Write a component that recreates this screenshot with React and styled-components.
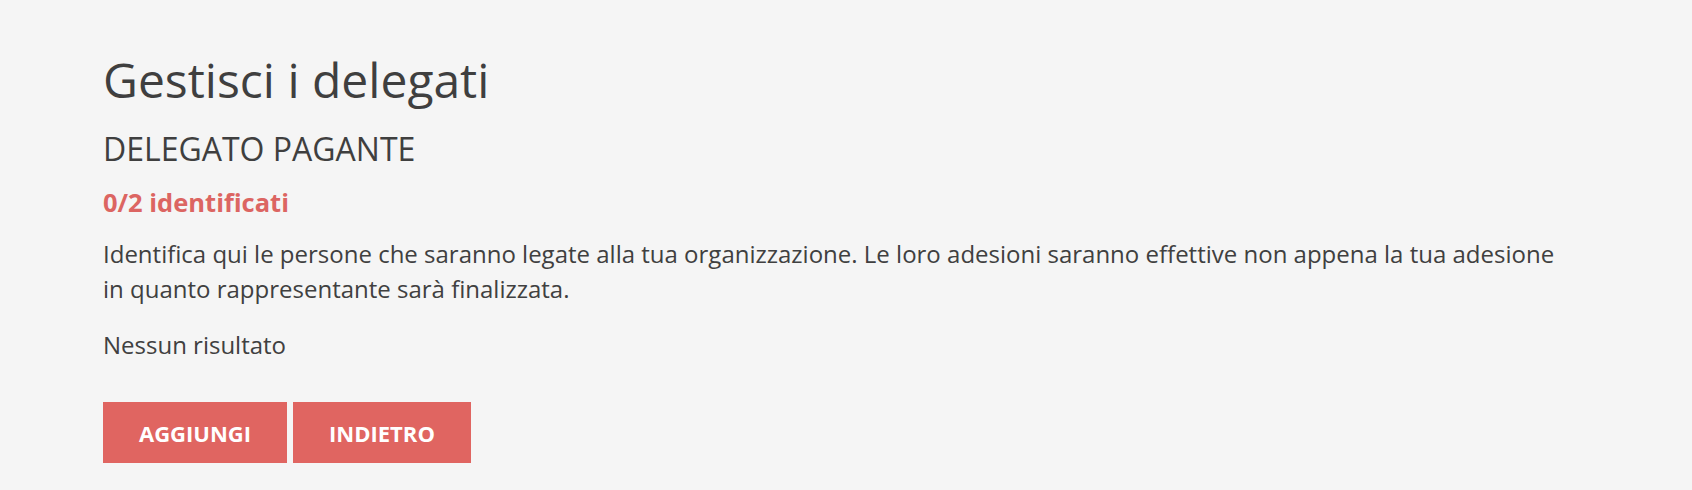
import React from "react";
import styled, { createGlobalStyle } from "styled-components";

const GlobalStyle = createGlobalStyle`
  html, body {
    margin: 0;
    padding: 0;
    background: #f5f5f5;
  }
  body {
    font-family: "Open Sans", "Noto Sans", sans-serif;
    color: #404040;
  }
`;

const Page = styled.main`
  box-sizing: border-box;
  min-height: 490px;
  padding: 46px 100px 26px 103px;
`;

const Title = styled.h1`
  margin: 0;
  font-size: 48px;
  font-weight: 400;
  line-height: 68px;
  color: #3f3f3f;
`;

const Subtitle = styled.h2`
  margin: 13px 0 0;
  font-size: 32px;
  font-weight: 400;
  line-height: 44px;
  color: #3f3f3f;
`;

const Counter = styled.p`
  margin: 15px 0 0;
  font-size: 25.5px;
  font-weight: 700;
  line-height: 32px;
  color: #dc6562;
`;

const Text = styled.p`
  margin: ${(p) => p.$top || 0}px 0 0;
  max-width: 1465px;
  font-size: 24px;
  line-height: 35px;
  color: #404040;
`;

const Actions = styled.div`
  display: flex;
  gap: 6px;
  margin-top: 40px;
`;

const Button = styled.button`
  height: 61px;
  padding: 0 36px;
  border: none;
  border-radius: 0;
  background: #e06561;
  color: #ffffff;
  font-family: "Open Sans", sans-serif;
  font-size: 22px;
  font-weight: 700;
  text-transform: uppercase;
  cursor: pointer;
`;

export default function App() {
  return (
    <>
      <GlobalStyle />
      <Page>
        <Title>Gestisci i delegati</Title>
        <Subtitle>DELEGATO PAGANTE</Subtitle>
        <Counter>0/2 identificati</Counter>
        <Text $top={18}>
          Identifica qui le persone che saranno legate alla tua organizzazione. Le loro adesioni
          saranno effettive non appena la tua adesione in quanto rappresentante sarà finalizzata.
        </Text>
        <Text $top={21}>Nessun risultato</Text>
        <Actions>
          <Button>Aggiungi</Button>
          <Button>Indietro</Button>
        </Actions>
      </Page>
    </>
  );
}
